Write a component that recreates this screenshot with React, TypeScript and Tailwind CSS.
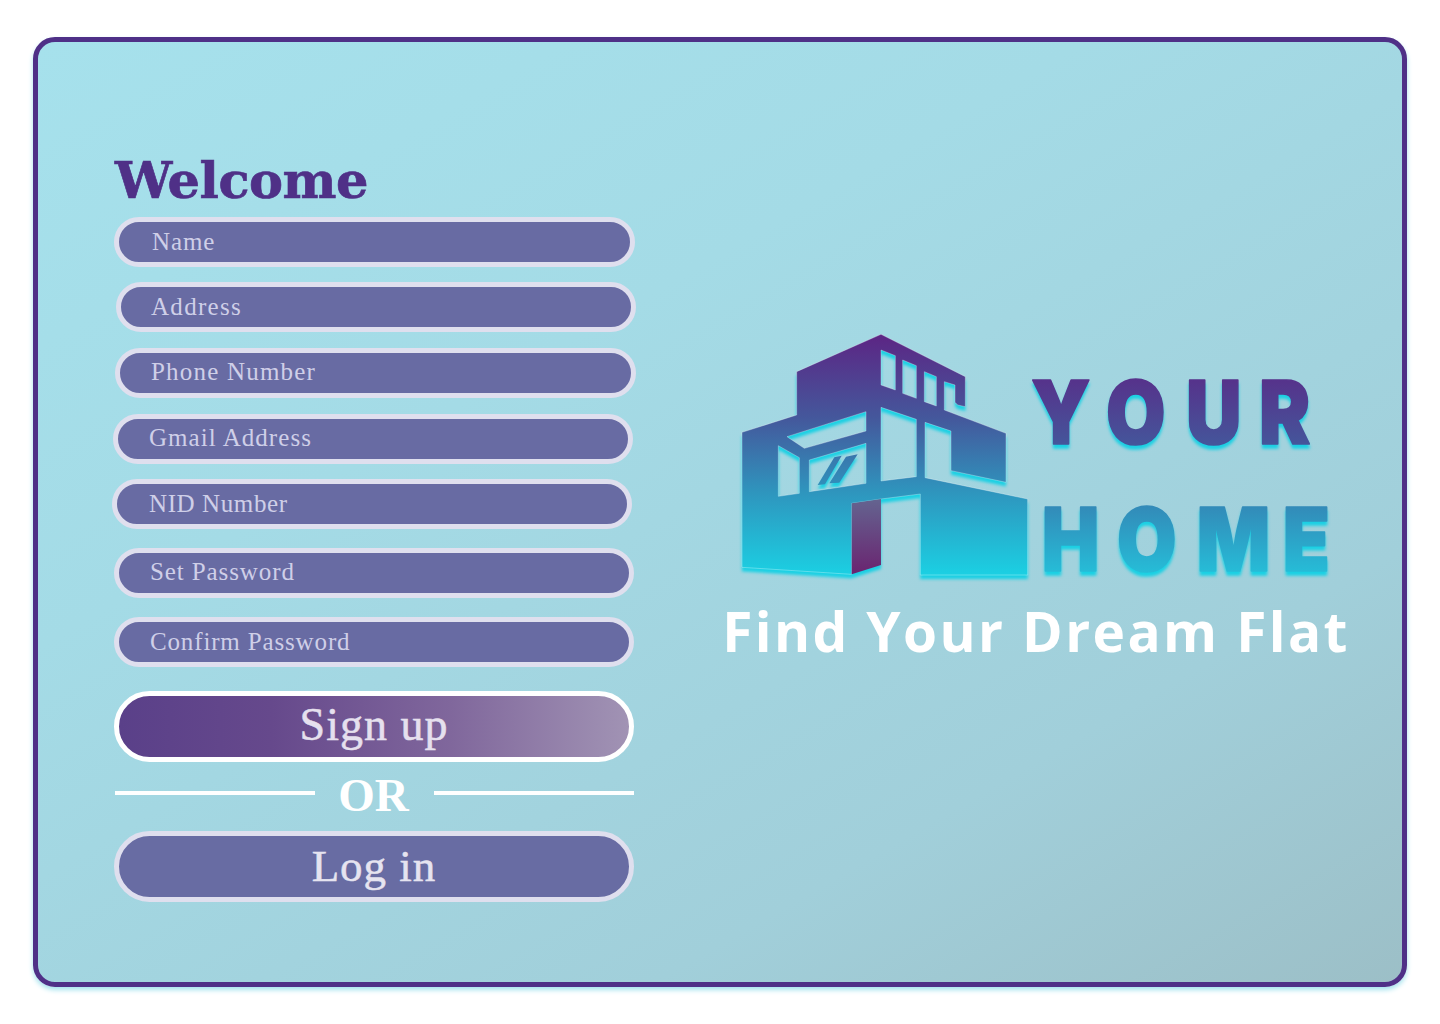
const serif = "font-['Liberation_Serif',serif]";

const fields = [
  { label: "Name", box: "mt-0 ml-0 w-[521px] pl-[33px] tracking-[0.9px]" },
  { label: "Address", box: "mt-[15px] ml-[2px] w-[520px] pl-[30px] tracking-[1.3px]" },
  { label: "Phone Number", box: "mt-[16px] ml-[1px] w-[521px] pl-[31px] pb-[2px] tracking-[1.2px]" },
  { label: "Gmail Address", box: "mt-[16px] -ml-[1px] w-[520px] pl-[31px] pb-[2px] tracking-[1.05px]" },
  { label: "NID Number", box: "mt-[15px] -ml-[2px] w-[520px] pl-[32px] tracking-[0.6px]" },
  { label: "Set Password", box: "mt-[19px] ml-0 w-[520px] pl-[31px] pb-[3px] tracking-[0.9px]" },
  { label: "Confirm Password", box: "mt-[19px] ml-0 w-[520px] pl-[31px] tracking-[0.85px]" },
];

function Logo() {
  const g = "url(#logoGrad)";
  const t = "url(#textGrad)";
  return (
    <svg viewBox="0 0 1830 795" className="h-[265px] w-[610px] shrink-0 overflow-visible drop-shadow-[0_4px_1.5px_#1bd0e3]">
      <defs>
        <linearGradient id="logoGrad" gradientUnits="userSpaceOnUse" x1="0" y1="28" x2="0" y2="750">
          <stop offset="0" stopColor="#5c2584" />
          <stop offset="0.35" stopColor="#44589c" />
          <stop offset="0.65" stopColor="#2f94bd" />
          <stop offset="1" stopColor="#1bd0e3" />
        </linearGradient>
        <linearGradient id="textGrad" gradientUnits="userSpaceOnUse" x1="0" y1="150" x2="0" y2="741">
          <stop offset="0" stopColor="#57308a" />
          <stop offset="0.36" stopColor="#44569b" />
          <stop offset="0.65" stopColor="#3388b7" />
          <stop offset="1" stopColor="#26bcd7" />
        </linearGradient>
        <linearGradient id="doorGrad" x1="0" y1="0" x2="0" y2="1">
          <stop offset="0" stopColor="#646490" />
          <stop offset="1" stopColor="#6a2470" />
        </linearGradient>
      </defs>
      <path
        fillRule="evenodd"
        fill={g}
        stroke="#ffffff"
        strokeOpacity="0.45"
        strokeWidth="2"
        d="M450 28 L703 155 L703 245 L680 240 L672 232 L672 180 L640 170 L640 255 L825 325 L825 472 L660 437 L660 318 L582 292 L582 458 L890 522 L890 750 L568 750 L568 507 L450 522 L362 535 L362 748 L33 727 L33 322 L197 270 L197 140 Z
        M450 75 L493 92 L493 195 L450 180 Z
        M515 105 L556 122 L556 220 L515 205 Z
        M580 140 L616 155 L616 243 L580 230 Z
        M450 247 L556 283 L556 455 L450 468 Z
        M168 335 L405 260 L405 318 L220 370 Z
        M142 362 L205 398 L205 505 L142 514 Z
        M235 405 L405 355 L405 475 L235 500 Z"
      />
      <path fill={g} d="M260 480 L310 397 L332 392 L282 478 Z M295 475 L345 395 L380 388 L325 473 Z" />
      <path fill="url(#doorGrad)" d="M362 535 L450 522 L450 720 L362 748 Z" />
      <g transform="scale(0.88 1)" fontFamily="Inter, sans-serif" fontWeight="900" fontSize="262" fill={t} stroke={t} strokeWidth="5" strokeLinejoin="round">
        <text x="1023 1278 1551 1800" y="357">YOUR</text>
        <text x="1059 1316 1588 1881" y="738">HOME</text>
      </g>
    </svg>
  );
}

export default function App() {
  return (
    <div className="min-h-[1024px] bg-white px-[33px] pt-[37px]">
      <div className="flex h-[950px] w-[1374px] rounded-[22px] border-[5px] border-[#4f3087] bg-[linear-gradient(150deg,#a6e1ec_0%,#a4dbe6_35%,#a1cfda_75%,#9cbfc7_100%)] shadow-[0_3px_5px_#a6e3ee]">
        <div className="ml-[76px] w-[521px] pt-[108px]">
          <h1 className="ml-[1px] h-[67px] font-['DejaVu_Serif',serif] text-[51px] leading-[60px] font-bold tracking-[-0.5px] text-[#4f3087] [-webkit-text-stroke:0.7px_#4f3087]">
            Welcome
          </h1>
          {fields.map((f) => (
            <div
              key={f.label}
              className={`${f.box} ${serif} flex h-[50px] items-center rounded-full border-[5px] border-[#dfdfee] bg-[#686ba3] text-[25px] text-[#cfcfe8]`}
            >
              {f.label}
            </div>
          ))}
          <button
            className={`${serif} mt-[24px] flex h-[71px] w-[520px] items-center justify-center rounded-full border-[5px] border-white bg-[linear-gradient(90deg,#5a4089_0%,#66498c_30%,#80679c_65%,#a193b4_100%)] pb-[4px] text-[46px] tracking-[1px] text-[#e6e0ee] [-webkit-text-stroke:0.5px_#e6e0ee]`}
          >
            Sign up
          </button>
          <div className="flex h-[69px] w-[520px] items-center pl-[1px]">
            <div className="-mt-[7px] h-[4px] w-[200px] bg-white" />
            <div className={`${serif} flex-1 pr-[2px] pb-[2px] text-center text-[47px] leading-none font-bold text-white`}>OR</div>
            <div className="-mt-[7px] h-[4px] w-[200px] bg-white" />
          </div>
          <button
            className={`${serif} flex h-[71px] w-[520px] items-center justify-center rounded-full border-[5px] border-[#dfdfee] bg-[#686ca3] text-[45px] tracking-[1px] text-[#e6e4f0] [-webkit-text-stroke:0.5px_#e6e4f0]`}
          >
            Log in
          </button>
        </div>
        <div className="ml-[96px] flex w-[610px] flex-col items-center pt-[283px]">
          <Logo />
          <h2 className="mt-[6px] font-['Open_Sans',sans-serif] text-[55px] leading-[70px] font-bold tracking-[2.4px] whitespace-nowrap text-white">
            Find Your Dream Flat
          </h2>
        </div>
      </div>
    </div>
  );
}
